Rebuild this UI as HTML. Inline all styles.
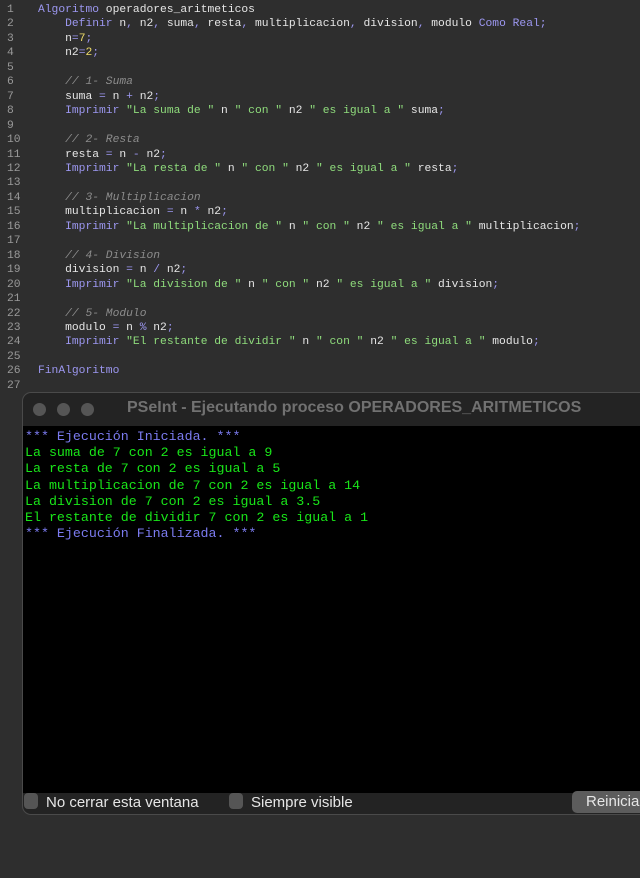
<!DOCTYPE html>
<html><head><meta charset="utf-8"><style>
body{margin:0;width:640px;height:878px;background:#2e2e2e;overflow:hidden;position:relative;font-family:"Liberation Mono",monospace}
.ed{position:absolute;top:3px;left:0;font-size:11.3px;line-height:14.46px;color:#e6e6e6;white-space:pre}
.ln{position:absolute;top:0;left:0;width:28px;text-align:left;padding-left:7px;color:#9a9a9a}
.code{position:absolute;left:38px;top:0}
.k{color:#9c97f0}.s{color:#8fdc7c}.n{color:#f0dd6a}.c{color:#8c8c8c;font-style:italic}
.win{position:absolute;left:22px;top:392px;width:630px;height:421px;background:#232323;border-radius:9px;border:1px solid #4a4a4a;overflow:hidden}
.tb{height:32px;position:relative}
.dot{position:absolute;top:10px;width:13px;height:13px;border-radius:50%;background:#555}
.title{position:absolute;left:104px;top:6px;font-family:"Liberation Sans",sans-serif;font-weight:bold;font-size:16px;color:#717171;white-space:nowrap}
.con{position:absolute;top:33px;left:0;right:0;height:364px;background:#000;font-size:13.3px;line-height:16.2px;white-space:pre;padding-top:3px;padding-left:2px}
.b{color:#7b7bf0}.g{color:#19e619}
.bot{position:absolute;top:398px;left:0;right:0;height:23px;font-family:"Liberation Sans",sans-serif;font-size:15px;color:#e6e6e6}
.cb{position:absolute;top:2px;width:14px;height:16px;border-radius:4px;background:#555}
.btn{position:absolute;left:549px;top:0;width:90px;height:22px;background:#5c5c5c;border-radius:5px;padding-left:14px;line-height:22px}
</style></head><body>
<div class="ed"><div class="ln">1
2
3
4
5
6
7
8
9
10
11
12
13
14
15
16
17
18
19
20
21
22
23
24
25
26
27</div><div class="code"><span class="k">Algoritmo</span> operadores_aritmeticos
    <span class="k">Definir</span> n<span class="k">,</span> n2<span class="k">,</span> suma<span class="k">,</span> resta<span class="k">,</span> multiplicacion<span class="k">,</span> division<span class="k">,</span> modulo <span class="k">Como Real;</span>
    n<span class="k">=</span><span class="n">7</span><span class="k">;</span>
    n2<span class="k">=</span><span class="n">2</span><span class="k">;</span>

    <span class="c">// 1- Suma</span>
    suma <span class="k">=</span> n <span class="k">+</span> n2<span class="k">;</span>
    <span class="k">Imprimir</span> <span class="s">"La suma de "</span> n <span class="s">" con "</span> n2 <span class="s">" es igual a "</span> suma<span class="k">;</span>

    <span class="c">// 2- Resta</span>
    resta <span class="k">=</span> n <span class="k">-</span> n2<span class="k">;</span>
    <span class="k">Imprimir</span> <span class="s">"La resta de "</span> n <span class="s">" con "</span> n2 <span class="s">" es igual a "</span> resta<span class="k">;</span>

    <span class="c">// 3- Multiplicacion</span>
    multiplicacion <span class="k">=</span> n <span class="k">*</span> n2<span class="k">;</span>
    <span class="k">Imprimir</span> <span class="s">"La multiplicacion de "</span> n <span class="s">" con "</span> n2 <span class="s">" es igual a "</span> multiplicacion<span class="k">;</span>

    <span class="c">// 4- Division</span>
    division <span class="k">=</span> n <span class="k">/</span> n2<span class="k">;</span>
    <span class="k">Imprimir</span> <span class="s">"La division de "</span> n <span class="s">" con "</span> n2 <span class="s">" es igual a "</span> division<span class="k">;</span>

    <span class="c">// 5- Modulo</span>
    modulo <span class="k">=</span> n <span class="k">%</span> n2<span class="k">;</span>
    <span class="k">Imprimir</span> <span class="s">"El restante de dividir "</span> n <span class="s">" con "</span> n2 <span class="s">" es igual a "</span> modulo<span class="k">;</span>

<span class="k">FinAlgoritmo</span>
</div></div>
<div class="win">
<div class="tb"><div class="dot" style="left:10px"></div><div class="dot" style="left:34px"></div><div class="dot" style="left:58px"></div>
<div class="title">PSeInt - Ejecutando proceso OPERADORES_ARITMETICOS</div></div>
<div class="con"><span class="b">*** Ejecución Iniciada. ***</span>
<span class="g">La suma de 7 con 2 es igual a 9
La resta de 7 con 2 es igual a 5
La multiplicacion de 7 con 2 es igual a 14
La division de 7 con 2 es igual a 3.5
El restante de dividir 7 con 2 es igual a 1</span>
<span class="b">*** Ejecución Finalizada. ***</span></div>
<div class="bot"><div class="cb" style="left:1px"></div><span style="position:absolute;left:23px;top:3px">No cerrar esta ventana</span>
<div class="cb" style="left:206px"></div><span style="position:absolute;left:228px;top:3px">Siempre visible</span>
<div class="btn">Reiniciar</div></div>
</div>
</body></html>
